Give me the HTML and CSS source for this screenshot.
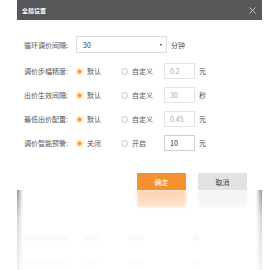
FILE: index.html
```html
<!DOCTYPE html>
<html lang="zh-CN">
<head>
  <meta charset="UTF-8">
  <title>全局设置</title>
  <link rel="stylesheet" href="styles.css">
</head>
<body>
  <div class="stage">
    <div class="dialog">
      <div class="dialog-head">
        <span class="dialog-title">全局设置</span>
        <svg class="close-icon" width="7" height="7" viewBox="0 0 7 7">
          <path d="M0.5 0.5 L6.5 6.5 M6.5 0.5 L0.5 6.5" stroke="#cfcfcf" stroke-width="0.9" fill="none"/>
        </svg>
      </div>

      <div class="dialog-body">
        <div class="row row-first">
          <span class="label">循环调价间隔:</span>
          <div class="select">
            <span>30</span>
            <span class="caret"></span>
          </div>
          <span class="unit">分钟</span>
        </div>

        <div class="row">
          <span class="label">调价步幅精度:</span>
          <span class="opt opt-a"><i class="radio checked"></i>默认</span>
          <span class="opt opt-b"><i class="radio"></i>自定义</span>
          <span class="field muted">0.2</span>
          <span class="unit">元</span>
        </div>

        <div class="row">
          <span class="label">出价生效间隔:</span>
          <span class="opt opt-a"><i class="radio checked"></i>默认</span>
          <span class="opt opt-b"><i class="radio"></i>自定义</span>
          <span class="field muted">30</span>
          <span class="unit">秒</span>
        </div>

        <div class="row">
          <span class="label">最低出价配置:</span>
          <span class="opt opt-a"><i class="radio checked"></i>默认</span>
          <span class="opt opt-b"><i class="radio"></i>自定义</span>
          <span class="field muted">0.45</span>
          <span class="unit">元</span>
        </div>

        <div class="row">
          <span class="label">调价智能预警:</span>
          <span class="opt opt-a"><i class="radio checked"></i>关闭</span>
          <span class="opt opt-b"><i class="radio"></i>开启</span>
          <span class="field active">10</span>
          <span class="unit">元</span>
        </div>
      </div>

      <div class="dialog-foot">
        <button class="btn btn-ok">确定</button>
        <button class="btn btn-cancel">取消</button>
      </div>
    </div>

    <!-- mirrored, blurred copy of the lower part of the dialog -->
    <div class="reflect">
      <div class="mirror">
        <div class="ghost-row">
          <b class="g-label"></b><b class="g-opt"></b><b class="g-opt2"></b><b class="g-unit"></b>
        </div>
        <div class="ghost-row">
          <b class="g-label"></b><b class="g-opt"></b><b class="g-opt2"></b><b class="g-unit"></b>
        </div>
        <div class="ghost-foot">
          <b class="g-btn g-ok"></b>
          <b class="g-btn g-cancel"></b>
        </div>
      </div>
    </div>
  </div>
</body>
</html>
```

FILE: styles.css
```css
/* General */
body {
  margin: 0;
  background: #fff;
  font-family: "Noto Sans CJK SC", "Noto Sans", sans-serif;
  color: #555;
  overflow: hidden;
}

.stage {
  width: 245px;
  margin-left: 17px;
}

/* Dialog */
.dialog {
  background: #fff;
}

.dialog-head {
  height: 20px;
  background: #585858;
  display: flex;
  align-items: center;
  justify-content: space-between;
  padding: 0 6px 0 5px;
}

.dialog-title {
  color: #fff;
  font-size: 6px;
  font-weight: bold;
}

.close-icon {
  display: block;
}

.dialog-body {
  padding: 16px 0 0 7px;
}

.row {
  display: flex;
  align-items: center;
  height: 16px;
  margin-bottom: 8px;
  font-size: 7px;
}

.row-first {
  height: 17px;
  margin-bottom: 10px;
}

.label {
  width: 52px;
  flex-shrink: 0;
}

.select {
  width: 91px;
  height: 17px;
  box-sizing: border-box;
  border: 1px solid #dcdcdc;
  display: flex;
  align-items: center;
  justify-content: space-between;
  padding: 0 4px 0 6px;
  color: #333;
}

.caret {
  width: 0;
  height: 0;
  border-left: 1.5px solid transparent;
  border-right: 1.5px solid transparent;
  border-top: 2px solid #333;
}

.unit {
  margin-left: 4px;
  color: #444;
}

/* Radios */
.opt {
  display: flex;
  align-items: center;
  flex-shrink: 0;
}

.opt-a {
  width: 45px;
}

.opt-b {
  width: 43px;
}

.radio {
  width: 7px;
  height: 7px;
  box-sizing: border-box;
  border: 1px solid #c4c4c4;
  border-radius: 50%;
  margin-right: 4px;
  background: #fff;
}

.radio.checked {
  border-color: #f5d2b2;
  background: radial-gradient(circle, #f7902d 0 1.8px, #fff 2.2px);
}

/* Inputs */
.field {
  width: 31px;
  height: 16px;
  box-sizing: border-box;
  border: 1px solid #e2e2e2;
  display: flex;
  align-items: center;
  padding-left: 5px;
  flex-shrink: 0;
}

.field.muted {
  color: #aaa;
}

.field.active {
  border-color: #cfcfcf;
  color: #222;
}

/* Footer */
.dialog-foot {
  display: flex;
  justify-content: flex-end;
  gap: 12px;
  padding: 14px 15px 0 0;
}

.btn {
  width: 49px;
  height: 17px;
  border: none;
  padding: 0;
  font-family: inherit;
  font-size: 7px;
}

.btn-ok {
  background: #f7912f;
  color: #fff;
}

.btn-cancel {
  background: #e2e2e2;
  color: #444;
}

/* Reflection */
.reflect {
  height: 80px;
  overflow: hidden;
  background:
    linear-gradient(to right, rgba(0, 0, 0, 0.45), rgba(0, 0, 0, 0) 6px),
    linear-gradient(to left, rgba(0, 0, 0, 0.45), rgba(0, 0, 0, 0) 6px);
  -webkit-mask-image: linear-gradient(to bottom, #000 0, rgba(0, 0, 0, 0.4) 35%, rgba(0, 0, 0, 0.12) 100%);
  mask-image: linear-gradient(to bottom, #000 0, rgba(0, 0, 0, 0.4) 35%, rgba(0, 0, 0, 0.12) 100%);
}

.mirror {
  height: 80px;
  transform: scaleY(-1);
  filter: blur(1.8px);
  opacity: 0.5;
}

.ghost-row {
  display: flex;
  align-items: center;
  height: 16px;
  margin-bottom: 8px;
  padding-left: 7px;
}

.ghost-row b {
  height: 4px;
  background: #c8c8c8;
}

.g-label {
  width: 44px;
  margin-right: 16px;
}

.g-opt {
  width: 14px;
  margin-right: 31px;
}

.g-opt2 {
  width: 14px;
  margin-right: 50px;
}

.g-unit {
  width: 6px;
}

.ghost-foot {
  display: flex;
  justify-content: flex-end;
  gap: 12px;
  padding: 15px 15px 0 0;
}

.g-btn {
  width: 49px;
  height: 17px;
}

.g-ok {
  background: #f9a55a;
}

.g-cancel {
  background: #e6e6e6;
}
```
